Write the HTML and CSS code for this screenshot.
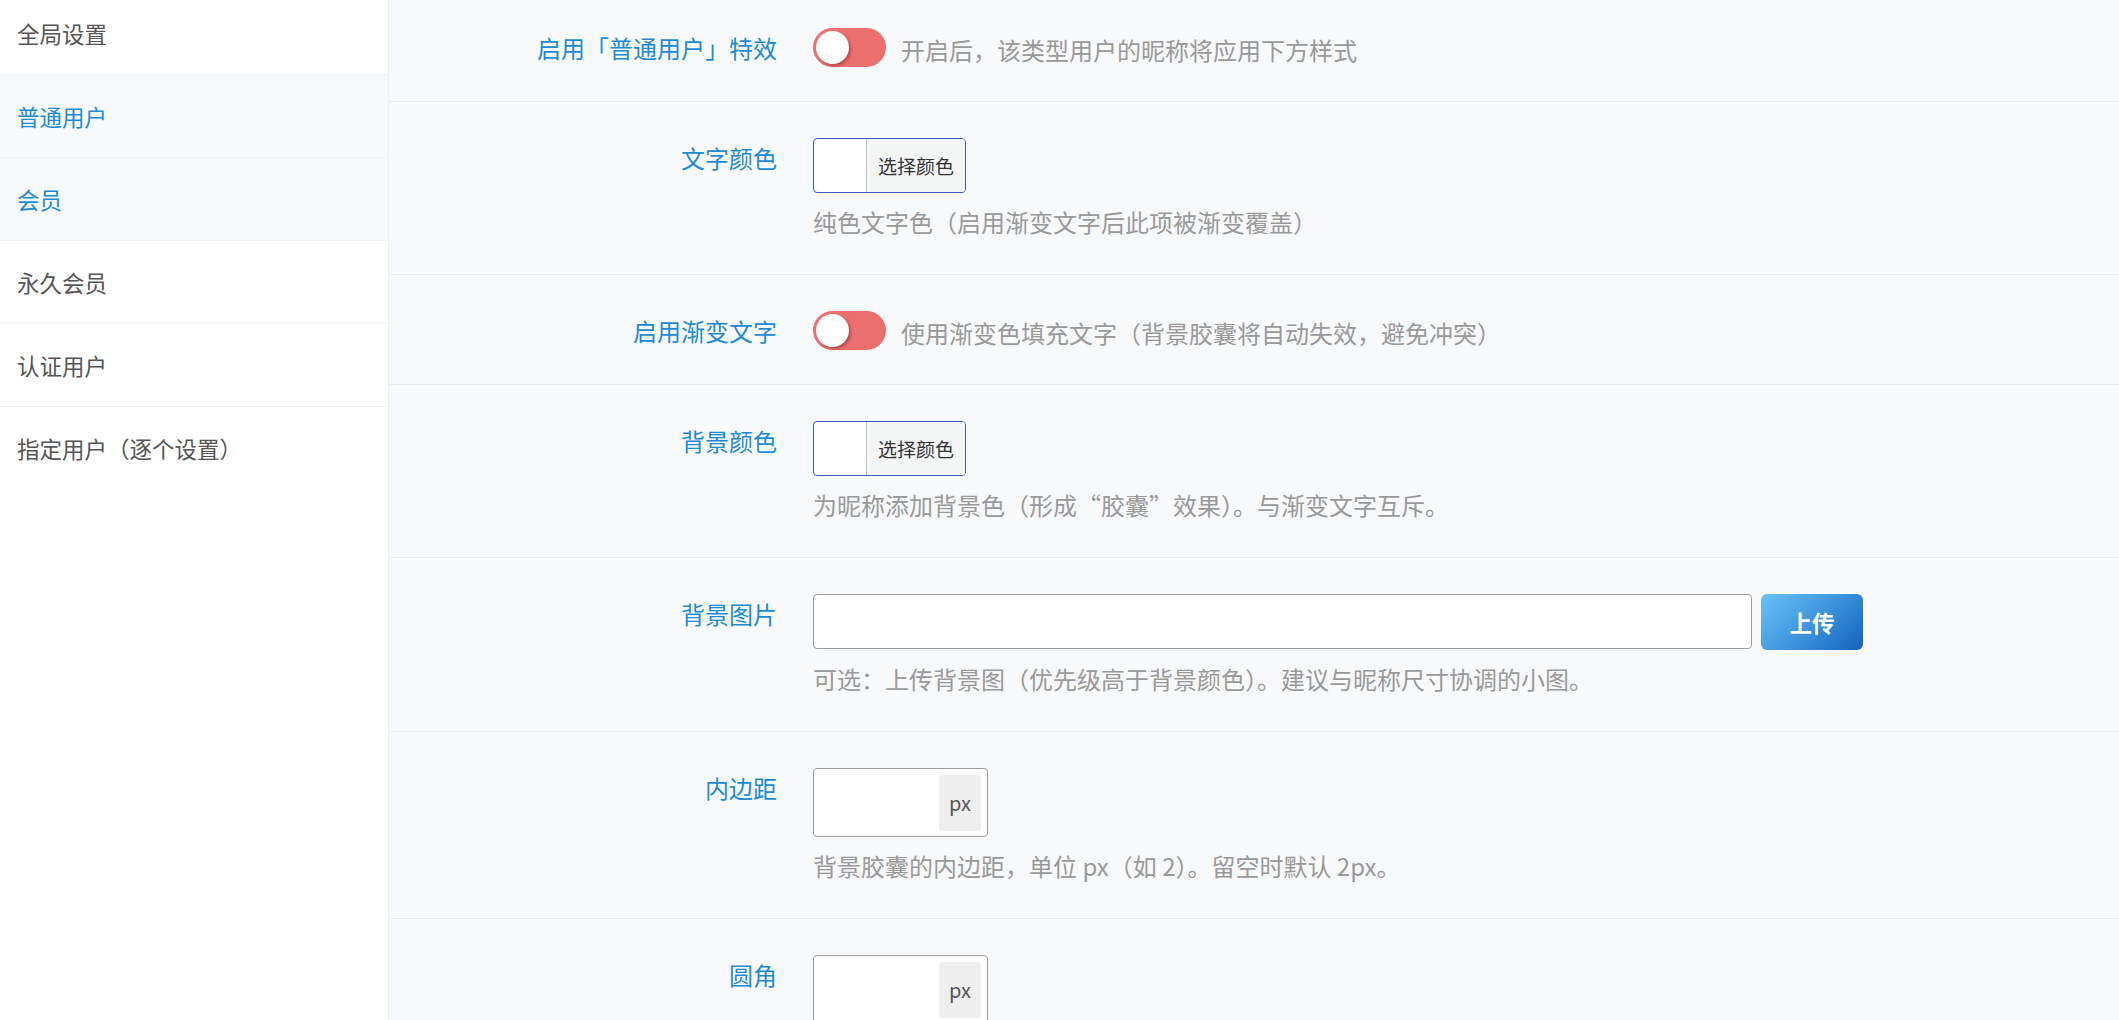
FILE: index.html
```html
<!doctype html>
<html lang="zh-CN">
<head>
<meta charset="utf-8" />
<title>用户昵称特效设置</title>
<link rel="stylesheet" href="styles.css">
</head>
<body>

<div class="layout">
	<nav class="side-nav">
		<a class="nav-item">全局设置</a>
		<a class="nav-item active">普通用户</a>
		<a class="nav-item active">会员</a>
		<a class="nav-item">永久会员</a>
		<a class="nav-item">认证用户</a>
		<a class="nav-item">指定用户（逐个设置）</a>
	</nav>

	<main class="panel">
		<div class="field">
			<label class="field-label">启用「普通用户」特效</label>
			<div class="field-body inline">
				<span class="switch"><span class="knob"></span></span>
				<span class="hint">开启后，该类型用户的昵称将应用下方样式</span>
			</div>
		</div>

		<div class="field">
			<label class="field-label">文字颜色</label>
			<div class="field-body">
				<div class="color-pick">
					<span class="swatch"></span>
					<span class="pick-btn">选择颜色</span>
				</div>
				<p class="hint">纯色文字色（启用渐变文字后此项被渐变覆盖）</p>
			</div>
		</div>

		<div class="field">
			<label class="field-label">启用渐变文字</label>
			<div class="field-body inline">
				<span class="switch"><span class="knob"></span></span>
				<span class="hint">使用渐变色填充文字（背景胶囊将自动失效，避免冲突）</span>
			</div>
		</div>

		<div class="field">
			<label class="field-label">背景颜色</label>
			<div class="field-body">
				<div class="color-pick">
					<span class="swatch"></span>
					<span class="pick-btn">选择颜色</span>
				</div>
				<p class="hint">为昵称添加背景色（形成“胶囊”效果）。与渐变文字互斥。</p>
			</div>
		</div>

		<div class="field">
			<label class="field-label">背景图片</label>
			<div class="field-body">
				<div class="upload-row">
					<input class="text-input" type="text" />
					<button class="upload-btn" type="button">上传</button>
				</div>
				<p class="hint">可选：上传背景图（优先级高于背景颜色）。建议与昵称尺寸协调的小图。</p>
			</div>
		</div>

		<div class="field">
			<label class="field-label">内边距</label>
			<div class="field-body">
				<div class="unit-input">
					<input type="text" />
					<span class="unit">px</span>
				</div>
				<p class="hint">背景胶囊的内边距，单位 px（如 2）。留空时默认 2px。</p>
			</div>
		</div>

		<div class="field">
			<label class="field-label">圆角</label>
			<div class="field-body">
				<div class="unit-input">
					<input type="text" />
					<span class="unit">px</span>
				</div>
				<p class="hint">背景胶囊的圆角，单位 px（如 4）。留空时默认 4px。</p>
			</div>
		</div>
	</main>
</div>

</body>
</html>
```

FILE: styles.css
```css
html, body {
	margin: 0;
	background-color: #f8f9fb;
	font-family: "Noto Sans CJK SC", "Noto Sans", sans-serif;
	overflow: hidden;
}

/* page is scrolled down a little */
.layout {
	display: flex;
	margin-top: -8px;
	min-height: 1040px;
}

.side-nav {
	width: 388px;
	flex: none;
	background-color: #fff;
	border-right: 1px solid #eef0f2;
	display: flex;
	flex-direction: column;
}

.nav-item {
	height: 82px;
	border-bottom: 1px solid #f0f1f3;
	padding-left: 17px;
	display: flex;
	align-items: center;
	font-size: 22.5px;
	color: #555;
}
.nav-item:last-child {
	border-bottom-color: transparent;
}
.nav-item.active {
	color: #1d8ad6;
	background-color: #f7f8fa;
}

.panel {
	flex: 1;
	background-color: #f8f9fb;
}

.field {
	display: grid;
	grid-template-columns: 388px 1fr;
	column-gap: 36px;
	padding: 36px 0 34px;
	border-bottom: 1px solid #e9ebee;
}

.field-label {
	text-align: right;
	font-size: 24px;
	line-height: 39px;
	color: #1d8ad6;
}

.hint {
	margin: 11px 0 0;
	font-size: 24px;
	line-height: 36px;
	color: #999;
}

.field-body.inline {
	display: flex;
	align-items: flex-start;
	height: 39px;
}
.field-body.inline .hint {
	margin: 0 0 0 15px;
	padding-top: 4px;
	line-height: 35px;
	white-space: nowrap;
}

.switch {
	width: 73px;
	height: 39px;
	border-radius: 20px;
	background-color: #ec6f6f;
	flex: none;
	display: flex;
	align-items: center;
	padding-left: 3px;
	box-sizing: border-box;
}
.knob {
	width: 33px;
	height: 33px;
	border-radius: 50%;
	background-color: #fff;
	box-shadow: 2px 2px 3px rgba(120, 30, 30, 0.45);
}

.color-pick {
	display: flex;
	width: 153px;
	height: 55px;
	box-sizing: border-box;
	border: 1px solid #3f5db6;
	border-radius: 4px;
	overflow: hidden;
	background-color: #fff;
}
.swatch {
	width: 52px;
	border-right: 1px solid #c6c6c6;
}
.pick-btn {
	flex: 1;
	background-color: #f4f5f5;
	display: flex;
	align-items: center;
	justify-content: center;
	font-size: 19px;
	color: #333;
}

.upload-row {
	display: flex;
	gap: 9px;
	height: 56px;
}
.text-input {
	width: 939px;
	height: 55px;
	box-sizing: border-box;
	border: 1px solid #9c9c9c;
	border-radius: 4px;
	background-color: #fff;
	margin: 0;
}
.upload-btn {
	width: 102px;
	height: 56px;
	border: none;
	border-radius: 6px;
	background: linear-gradient(135deg, #6ac2f7 0%, #3e95dd 50%, #1462bd 100%);
	color: #fff;
	font-family: inherit;
	font-size: 22.5px;
	font-weight: bold;
	padding: 0;
}

.unit-input {
	display: flex;
	align-items: center;
	width: 175px;
	height: 69px;
	box-sizing: border-box;
	border: 1px solid #9c9c9c;
	border-radius: 4px;
	background-color: #fff;
	padding-right: 6px;
}
.unit-input input {
	flex: 1;
	min-width: 0;
	border: none;
	outline: none;
	background: transparent;
}
.unit {
	width: 42px;
	height: 56px;
	border-radius: 4px;
	background-color: #eee;
	display: flex;
	align-items: center;
	justify-content: center;
	font-size: 20px;
	color: #555;
}
```
